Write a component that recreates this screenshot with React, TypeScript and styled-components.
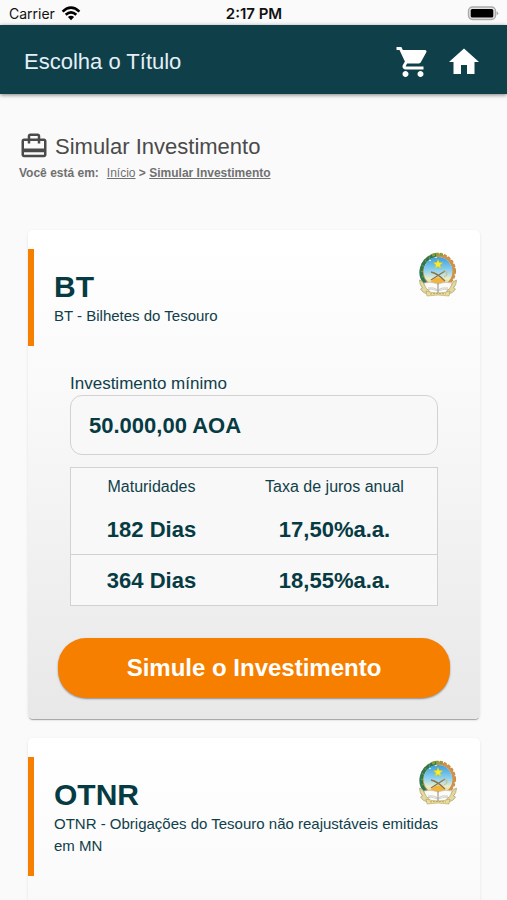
import React from "react";
import styled, { createGlobalStyle } from "styled-components";
import { MdCardTravel, MdHome, MdShoppingCart } from "react-icons/md";

const teal = "#0f404a";
const orange = "#f77f00";

const GlobalStyle = createGlobalStyle`
  *, *::before, *::after { box-sizing: border-box; }
  body {
    margin: 0;
    background: #fafafa;
    color: ${teal};
    font-family: "Liberation Sans", Arial, sans-serif;
  }
`;

const Screen = styled.div`
  display: flex;
  flex-direction: column;
  height: 100vh;
`;

const StatusBar = styled.div`
  display: grid;
  grid-template-columns: 1fr auto 1fr;
  align-items: center;
  flex: none;
  height: 25px;
  padding: 2px 8px 0 9px;
  color: #111;
  font: 400 14px/20px Inter, sans-serif;
`;

const Carrier = styled.span`
  display: flex;
  align-items: center;
  gap: 6px;
`;

const Clock = styled.time`
  font-size: 15px;
  font-weight: 600;
`;

const BatteryIcon = styled.svg`
  justify-self: end;
`;

const AppBar = styled.header`
  display: flex;
  align-items: center;
  justify-content: space-between;
  flex: none;
  height: 69px;
  padding: 4px 25px 0 24px;
  background: ${teal};
  color: #fff;
  box-shadow: 0 1px 4px rgba(0, 0, 0, 0.5);
  z-index: 1;
`;

const AppTitle = styled.h1`
  margin: 0;
  color: #e4eff7;
  font-size: 22px;
  font-weight: 400;
`;

const Actions = styled.nav`
  display: flex;
  gap: 15px;
`;

const IconButton = styled.button`
  display: flex;
  padding: 0;
  border: 0;
  background: none;
  color: inherit;
  cursor: pointer;
`;

const Content = styled.main`
  flex: 1;
  min-height: 0;
  overflow-y: auto;
  scrollbar-width: none;
  padding: 36px 27px 28px 28px;
`;

const PageHeading = styled.div`
  margin: 0 0 48px -9px;
`;

const PageTitle = styled.h2`
  display: flex;
  align-items: center;
  gap: 6px;
  margin: 0;
  color: #4a4a4a;
  font-size: 22px;
  font-weight: 400;
  line-height: 34px;

  svg {
    flex: none;
    margin-bottom: 2px;
  }
`;

const Breadcrumb = styled.nav`
  color: #707070;
  font-size: 12px;
  font-weight: 700;
  line-height: 18px;
`;

const Crumb = styled.a<{ $current?: boolean }>`
  color: inherit;
  font-weight: ${({ $current }) => ($current ? 700 : 400)};
`;

const CrumbLabel = styled.span`
  margin-right: 8px;
`;

const CardList = styled.div`
  display: flex;
  flex-direction: column;
  gap: 19px;
`;

const Card = styled.article`
  min-height: 489px;
  padding: 19px 0 21px;
  border-radius: 5px;
  background: linear-gradient(#fff, #fafafa 30%, #e8e8e8);
  box-shadow: 0 2px 1px -1px rgba(0, 0, 0, 0.3), 0 1px 3px rgba(0, 0, 0, 0.1);
`;

const CardHeader = styled.header`
  display: flex;
  align-items: flex-start;
  padding: 0 22px 19px 20px;
  border-left: 6px solid ${orange};
`;

const CardText = styled.div`
  flex: 1;
  min-width: 0;
  padding-top: 20px;
`;

const CardTitle = styled.h3`
  margin: 0;
  color: #073b44;
  font-size: 30px;
  font-weight: 700;
  line-height: 36px;
`;

const CardDescription = styled.p`
  margin: 0;
  padding-right: 16px;
  font-size: 15px;
  line-height: 22px;
`;

const EmblemIcon = styled.svg`
  flex: none;
  margin: 3px 0 0 -40px;
`;

const CardBody = styled.div`
  padding: 27px 42px 0;
`;

const Field = styled.label`
  display: block;
  font-size: 17px;
  line-height: 22px;
`;

const AmountInput = styled.input`
  display: block;
  width: 100%;
  height: 60px;
  padding: 2px 18px 0;
  border: 1px solid #d2d2d2;
  border-radius: 12px;
  outline: 0;
  background: #f8f8f8;
  color: #073b44;
  font: 700 22px "Liberation Sans", Arial, sans-serif;
`;

const RateTable = styled.table`
  width: 100%;
  margin-top: 12px;
  border: 1px solid #d2d2d2;
  border-collapse: collapse;
  table-layout: fixed;
  background: #f8f8f8;
  text-align: center;
`;

const HeadCell = styled.th<{ $width: string }>`
  width: ${({ $width }) => $width};
  height: 36px;
  padding: 2px 0 0;
  font-size: 16px;
  font-weight: 400;
`;

const RateRow = styled.tr`
  height: 51px;

  & + & {
    border-top: 1px solid #d2d2d2;
  }
`;

const RateCell = styled.td`
  padding: 2px 0 0;
  color: #073b44;
  font-size: 22px;
  font-weight: 700;
`;

const CardFooter = styled.footer`
  padding: 32px 30px 0;
`;

const SimulateButton = styled.button`
  display: block;
  width: 100%;
  height: 60px;
  border: 0;
  border-radius: 28px;
  background: ${orange};
  box-shadow: 0 1px 2px rgba(0, 0, 0, 0.4);
  color: #fff;
  font: 700 24px "Liberation Sans", Arial, sans-serif;
  cursor: pointer;
`;

function Wifi() {
  return (
    <svg width="20" height="15" viewBox="0 0 20 15" aria-hidden="true">
      <g fill="none" stroke="#000" strokeWidth="2.6">
        <path d="M1.6 5.6Q10-2.2 18.4 5.6" />
        <path d="M4.7 8.8Q10 4 15.3 8.8" />
      </g>
      <path d="M6.9 10.9Q10 8.4 13.1 10.9L10 14.2Z" />
    </svg>
  );
}

function Battery() {
  return (
    <BatteryIcon width="32" height="15" viewBox="0 0 32 15" role="img" aria-label="Bateria">
      <rect x="1.5" y="1" width="27" height="12.5" rx="4" fill="#e4e4e4" stroke="#aaa" strokeWidth="1.4" />
      <rect x="3.7" y="3" width="22.6" height="8.6" rx="1.6" />
      <path d="M29.6 5.2Q33 7.2 29.6 9.4Z" fill="#aaa" />
    </BatteryIcon>
  );
}

function Emblem() {
  return (
    <EmblemIcon width="40" height="46" viewBox="0 0 40 46" role="img" aria-label="República de Angola">
      <defs>
        <linearGradient id="sky" x1="0" y1="0" x2="0" y2="1">
          <stop offset="0" stopColor="#3b9edb" />
          <stop offset=".45" stopColor="#8bd0f0" />
          <stop offset=".75" stopColor="#e9eed0" />
          <stop offset="1" stopColor="#f3c54e" />
        </linearGradient>
      </defs>
      <circle cx="20" cy="19" r="17" fill="none" stroke="#c98a3e" strokeWidth="2" strokeDasharray="3 1.5" />
      <circle cx="20" cy="19" r="15.6" fill="none" stroke="#d0924a" strokeWidth="3" />
      <path d="M8 32C-1 22 3 7 18 2.8" fill="none" stroke="#2c7850" strokeWidth="3.6" />
      <path d="M14 3.4Q19 1 25 3.2" fill="none" stroke="#8b9f35" strokeWidth="3" strokeDasharray="3 1" />
      <path d="M3.5 13l3 2M2.7 19l3 1M3.5 25l3-1M7 8l2 3M11 4.5l1 3" stroke="#78954c" strokeWidth="1" />
      <circle cx="20" cy="19.5" r="14.4" fill="url(#sky)" />
      <path d="M12 31q8-11 16 0Z" fill="#f2b43d" />
      <path d="M20 7.4l1.3 3.2 3.5.2-2.7 2.2 1 3.3-3.1-1.9-3 1.9 1-3.3-2.7-2.2 3.5-.2Z" fill="#faee24" stroke="#c9c038" strokeWidth=".5" />
      <path d="M13 28L27 19M13 20q6 1 14 9" fill="none" stroke="#8c7447" strokeWidth="1.3" />
      <path d="M25 19q4-1 4 4l-3 2" fill="none" stroke="#cfb881" strokeWidth="1" />
      <path d="M6 31Q13 29 20 32Q27 29 34 31V38Q26 36 20 39Q14 36 6 38Z" fill="#fcfbf8" stroke="#b9b8ac" strokeWidth=".6" />
      <path d="M1.5 28q4 1 5 5 1 4 5 6l-2 3q-5-1-7-5l2-1q-3-3-3-8ZM38.5 28q-4 1-5 5-1 4-5 6l2 3q5-1 7-5l-2-1q3-3 3-8Z" fill="#e2d8a0" stroke="#a3945e" strokeWidth=".6" />
      <path d="M8 39q12 4 24 0l-1 5q-11-2-22 0Z" fill="#eadd9c" stroke="#b09f5c" strokeWidth=".6" />
      <path d="M20 31v10" stroke="#8f958f" strokeWidth="1.1" />
      <path d="M10 36q6-1 10 2 4-3 10-2" fill="none" stroke="#b9bbb4" strokeWidth=".8" />
      <path d="M12 42q8-1 16 0" fill="none" stroke="#c0a952" strokeWidth="1" strokeDasharray="2 1" />
      <circle cx="12" cy="8.5" r=".8" fill="#e6fff6" />
      <circle cx="18" cy="5.5" r=".8" fill="#e6fff6" />
    </EmblemIcon>
  );
}

interface Rate {
  term: string;
  value: string;
}

interface Security {
  code: string;
  description: string;
  minimum?: string;
  rates?: Rate[];
}

const securities: Security[] = [
  {
    code: "BT",
    description: "BT - Bilhetes do Tesouro",
    minimum: "50.000,00 AOA",
    rates: [
      { term: "182 Dias", value: "17,50%a.a." },
      { term: "364 Dias", value: "18,55%a.a." },
    ],
  },
  {
    code: "OTNR",
    description: "OTNR - Obrigações do Tesouro não reajustáveis emitidas em MN",
  },
];

function SecurityCard({ code, description, minimum, rates }: Security) {
  return (
    <Card>
      <CardHeader>
        <CardText>
          <CardTitle>{code}</CardTitle>
          <CardDescription>{description}</CardDescription>
        </CardText>
        <Emblem />
      </CardHeader>
      {rates && (
        <>
          <CardBody>
            <Field>
              Investimento mínimo
              <AmountInput type="text" readOnly value={minimum} />
            </Field>
            <RateTable>
              <thead>
                <tr>
                  <HeadCell scope="col" $width="44%">Maturidades</HeadCell>
                  <HeadCell scope="col" $width="56%">Taxa de juros anual</HeadCell>
                </tr>
              </thead>
              <tbody>
                {rates.map((rate) => (
                  <RateRow key={rate.term}>
                    <RateCell>{rate.term}</RateCell>
                    <RateCell>{rate.value}</RateCell>
                  </RateRow>
                ))}
              </tbody>
            </RateTable>
          </CardBody>
          <CardFooter>
            <SimulateButton type="button">Simule o Investimento</SimulateButton>
          </CardFooter>
        </>
      )}
    </Card>
  );
}

export default function App() {
  return (
    <Screen>
      <GlobalStyle />
      <StatusBar>
        <Carrier>
          Carrier <Wifi />
        </Carrier>
        <Clock>2:17 PM</Clock>
        <Battery />
      </StatusBar>
      <AppBar>
        <AppTitle>Escolha o Título</AppTitle>
        <Actions>
          <IconButton type="button" aria-label="Carrinho">
            <MdShoppingCart size={36} />
          </IconButton>
          <IconButton type="button" aria-label="Página inicial">
            <MdHome size={36} />
          </IconButton>
        </Actions>
      </AppBar>
      <Content>
        <PageHeading>
          <PageTitle>
            <MdCardTravel size={30} />
            Simular Investimento
          </PageTitle>
          <Breadcrumb aria-label="Navegação">
            <CrumbLabel>Você está em:</CrumbLabel>
            <Crumb href="#inicio">Início</Crumb> &gt;{" "}
            <Crumb href="#simular" $current>Simular Investimento</Crumb>
          </Breadcrumb>
        </PageHeading>
        <CardList>
          {securities.map((security) => (
            <SecurityCard key={security.code} {...security} />
          ))}
        </CardList>
      </Content>
    </Screen>
  );
}
